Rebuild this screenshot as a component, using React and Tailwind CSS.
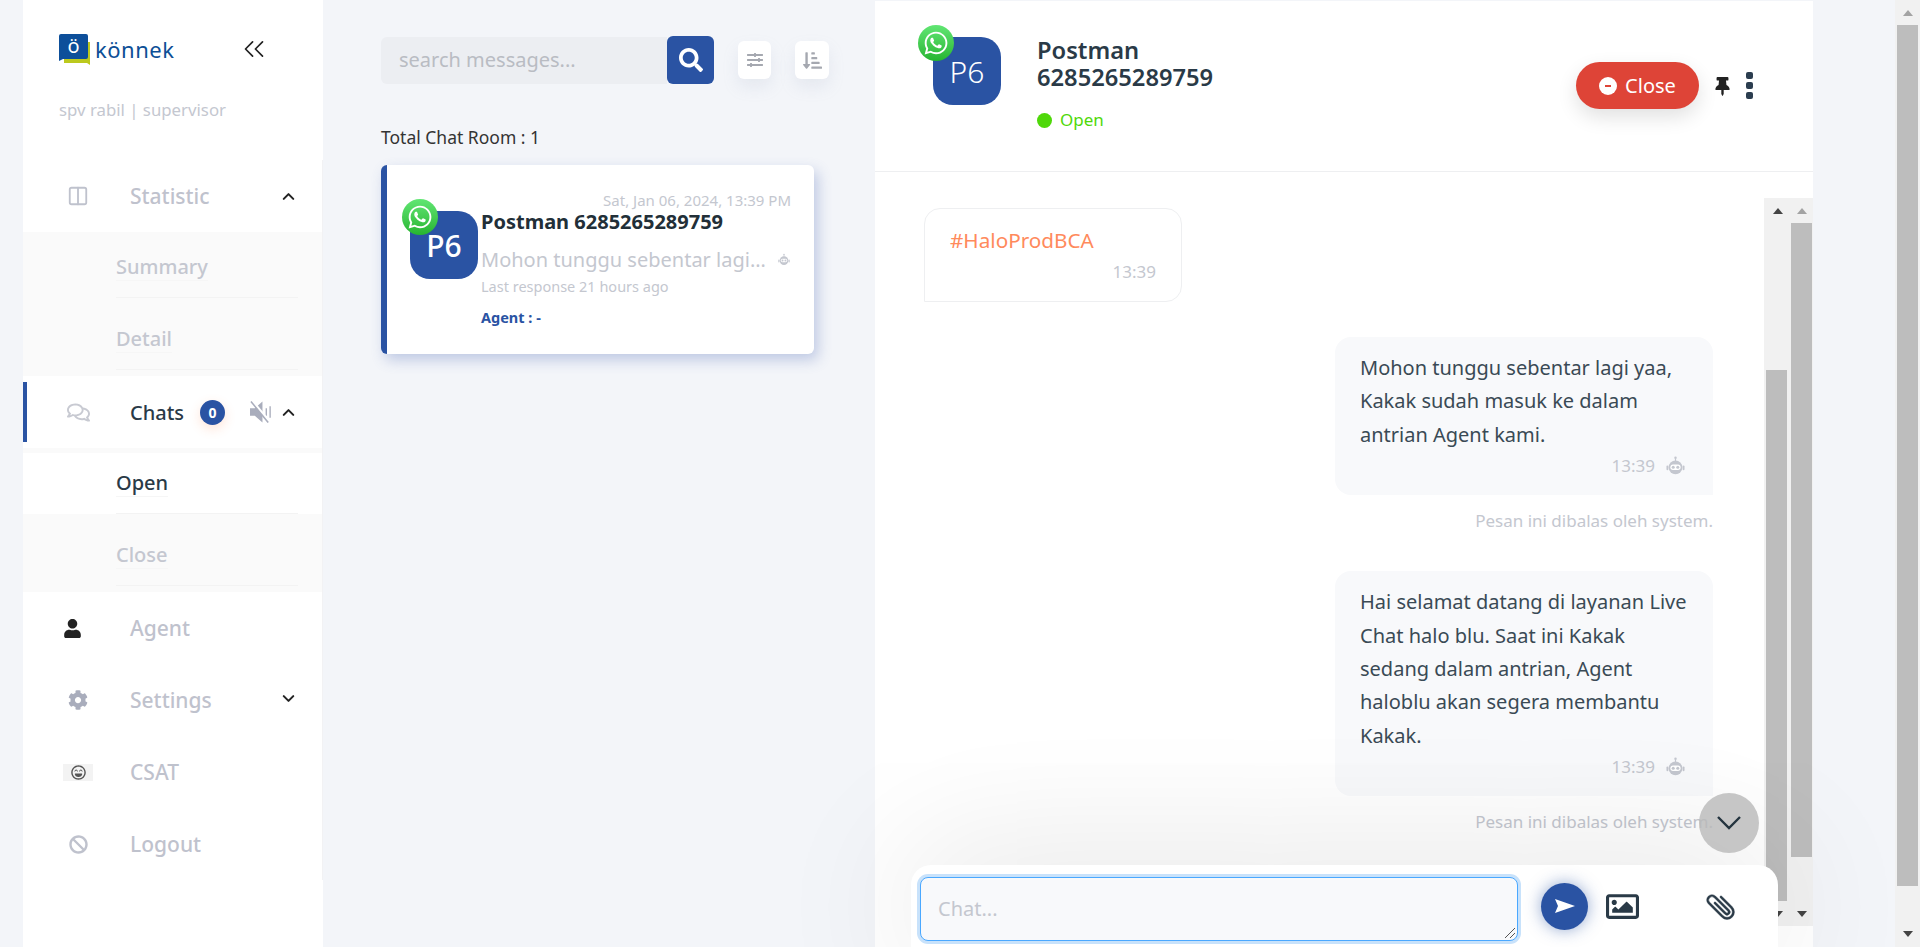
import {
  FaWhatsapp, FaSearch, FaSlidersH, FaSortAmountDownAlt, FaUser, FaCog, FaRegLaughBeam, FaBan,
  FaRegComments, FaThumbtack, FaRegImage,
} from "react-icons/fa";
import { BsPaperclip } from "react-icons/bs";
import { LuChevronUp, LuChevronDown, LuChevronsLeft, LuColumns2 } from "react-icons/lu";

function Robot({ className }) {
  return (
    <svg viewBox="0 0 20 22" className={className} fill="currentColor">
      <circle cx="10" cy="1.8" r="1.3" />
      <rect x="9.4" y="2.5" width="1.2" height="3" />
      <circle cx="10" cy="12" r="7.2" />
      <rect x="0.5" y="10" width="2" height="5" rx="1" />
      <rect x="17.5" y="10" width="2" height="5" rx="1" />
      <rect x="4.6" y="9" width="10.8" height="5.6" rx="2.8" fill="#fff" />
      <circle cx="7.6" cy="11.8" r="1.6" />
      <circle cx="12.4" cy="11.8" r="1.6" />
    </svg>
  );
}

function Wa({ className }) {
  return (
    <div className={`flex h-9 w-9 items-center justify-center rounded-full bg-gradient-to-b from-[#61e673] to-[#25b52f] text-white ${className}`}>
      <FaWhatsapp size={26} />
    </div>
  );
}

function Avatar({ className, textClass }) {
  return (
    <div className={`flex h-[68px] w-[68px] items-center justify-center rounded-[20px] bg-[#2a53a3] text-white ${textClass} ${className}`}>
      P6
    </div>
  );
}

function MenuRow({ icon, label, active, right }) {
  return (
    <div className="flex h-[72px] items-center bg-white">
      <span className={active ? "h-[60px] w-1 bg-[#2a53a3]" : "h-[60px] w-1"} />
      <span className="ml-9 flex w-[30px] items-center justify-center">{icon}</span>
      <span className={`ml-[37px] pt-[2px] font-medium ${active ? "text-[20px] text-[#2a3a47]" : "text-[21px] text-[#bfc2cd]"}`}>{label}</span>
      {right}
    </div>
  );
}

function SubItem({ label, active }) {
  return (
    <div className="h-[72px] pt-[5px]">
      <div className={`flex h-[61px] flex-col pl-[93px] pr-6 ${active ? "bg-white" : ""}`}>
        <div className={`flex flex-1 items-center border-b border-[#f3f3f3] text-[20px] font-medium ${active ? "text-[#2a3a47]" : "text-[#c4c7d0]"}`}>
          <span className="border-b border-[#f6f6f6] leading-[27px]">{label}</span>
        </div>
      </div>
    </div>
  );
}

function Sidebar() {
  return (
    <aside className="ml-[23px] h-full w-[300px] shrink-0 bg-white">
      <div className="h-[160px] pl-9">
        <div className="flex h-[66px] items-center pt-8">
          <div className="relative h-[31px] w-[31px]">
            <svg viewBox="0 0 31 31" className="h-[31px] w-[31px]">
              <path d="M5 8h26v23l-3-2H5z" fill="#bcc91e" />
              <path d="M2 0h25a2 2 0 0 1 2 2v21a2 2 0 0 1-2 2H4l-4 2V2a2 2 0 0 1 2-2z" fill="#0d4f9a" />
            </svg>
            <span className="absolute left-0 top-0 flex h-[25px] w-[29px] items-center justify-center text-[20px] leading-none text-white">ö</span>
          </div>
          <span className="ml-[5px] text-[22px] leading-[30px] tracking-[0.5px] text-[#0d4f96]">könnek</span>
          <LuChevronsLeft className="ml-[63px] text-[#222]" size={34} strokeWidth={1.2} />
        </div>
        <div className="mt-[32px] text-[16.8px] leading-6 text-[#c4c7d0]">spv rabil | supervisor</div>
      </div>

      <div className="border-r border-[#f2f2f4]">
        <MenuRow
          icon={<LuColumns2 size={22} className="text-[#bfc2cd]" />}
          label="Statistic"
          right={<LuChevronUp className="ml-auto mr-6 text-[#222]" size={19} strokeWidth={2.6} />}
        />
        <div className="bg-[#fafafa]">
          <SubItem label="Summary" />
          <SubItem label="Detail" />
        </div>
        <MenuRow
          icon={<FaRegComments size={23} className="text-[#c8cad2]" />}
          label="Chats"
          active
          right={
            <>
              <span className="ml-4 flex h-[25px] w-[25px] items-center justify-center rounded-full bg-[#2a53a3] text-[14px] font-bold text-white shadow-[0_4px_12px_rgba(255,120,60,0.2)]">0</span>
              <svg viewBox="0 0 24 22" className="ml-[25px] h-[22px] w-[23px]">
                <path d="M0 7h5l8-7v22l-8-7H0z" fill="#a9adbc" />
                <path d="M17 7v8M21 5v12" stroke="#a9adbc" strokeWidth="1.4" />
                <path d="M3 0l18 22" stroke="#fff" strokeWidth="2.6" />
                <path d="M1 0l18 22" stroke="#a9adbc" strokeWidth="1.6" />
              </svg>
              <LuChevronUp className="ml-auto mr-6 text-[#222]" size={19} strokeWidth={2.6} />
            </>
          }
        />
        <div className="bg-[#fafafa]">
          <SubItem label="Open" active />
          <SubItem label="Close" />
        </div>
        <MenuRow icon={<FaUser size={19} className="-ml-[12px] text-[#222]" />} label="Agent" />
        <MenuRow
          icon={<FaCog size={20} className="text-[#a9adbc]" />}
          label="Settings"
          right={<LuChevronDown className="ml-auto mr-6 -mt-1 text-[#222]" size={19} strokeWidth={2.6} />}
        />
        <MenuRow
          icon={<span className="flex h-[17px] w-[30px] items-center justify-center bg-[#f3f3f3]"><FaRegLaughBeam size={15} className="text-[#555]" /></span>}
          label="CSAT"
        />
        <MenuRow icon={<FaBan size={19} className="text-[#bfc2cd]" />} label="Logout" />
      </div>
    </aside>
  );
}

function ChatList() {
  return (
    <main className="h-full w-[552px] shrink-0 pl-[58px] pt-9">
      <div className="flex items-center">
        <div className="flex h-[47px] w-[286px] items-center rounded-l-md bg-[#eceef2] pl-[18px] text-[20px] text-[#b9bcc3]">search messages...</div>
        <div className="flex h-12 w-[47px] items-center justify-center rounded-md bg-[#2a53a3] text-white"><FaSearch size={24} /></div>
        <div className="ml-6 flex h-[38px] w-[33px] items-center justify-center rounded-md bg-white text-[#a5a8b0] shadow-[0_8px_16px_rgba(150,160,190,0.15)]"><FaSlidersH size={16} /></div>
        <div className="ml-6 flex h-[38px] w-[34px] items-center justify-center rounded-md bg-white text-[#a5a8b0] shadow-[0_8px_16px_rgba(150,160,190,0.15)]"><FaSortAmountDownAlt size={19} /></div>
      </div>
      <div className="mt-[41px] text-[17.5px] leading-6 text-[#333]">Total Chat Room : 1</div>
      <div className="relative mt-4 h-[189px] w-[433px] rounded-md border-l-[6px] border-[#2a53a3] bg-white shadow-[4px_6px_14px_rgba(70,100,180,0.3)]">
        <div className="pr-[23px] pt-[25px] text-right text-[15px] leading-5 text-[#c4c7cf]">Sat, Jan 06, 2024, 13:39 PM</div>
        <div className="flex pl-[23px]">
          <Avatar className="mt-[1px] shrink-0" textClass="text-[30px] font-medium" />
          <div className="ml-[3px] min-w-0">
            <div className="text-[20px] font-bold leading-6 text-[#222f38]">Postman 6285265289759</div>
            <div className="mt-[11px] flex items-center">
              <span className="w-[289px] truncate text-[20px] leading-[30px] text-[#c4c7cf]">Mohon tunggu sebentar lagi yaa, Kakak</span>
              <Robot className="ml-2 h-[14px] w-[12px] text-[#c4c7cf]" />
            </div>
            <div className="mt-[1px] text-[14.5px] leading-5 text-[#c4c7cf]">Last response 21 hours ago</div>
            <div className="mt-[11px] text-[14.5px] font-bold leading-5 text-[#2a53a3]">Agent : -</div>
          </div>
        </div>
        <Wa className="absolute left-[15px] top-[34px]" />
      </div>
    </main>
  );
}

function Meta({ robot }) {
  return (
    <div className="flex items-center justify-end text-[17px] leading-6 text-[#c4c7cf]">
      13:39
      {robot && <Robot className="ml-[11px] h-[21px] w-[19px] text-[#c4c7cf]" />}
    </div>
  );
}

function BotBubble({ lines, className }) {
  return (
    <div className={className}>
      <div className="ml-auto w-[378px] rounded-[16px] rounded-br-none bg-[#f8f9fb] px-[25px] pt-[14px] pb-[17px]">
        <div className="text-[20px] leading-[33.4px] text-[#3a4a55]">
          {lines.map((l) => <div key={l}>{l}</div>)}
        </div>
        <div className="mt-[3px] pr-[3px]"><Meta robot /></div>
      </div>
      <div className="mt-[14px] text-right text-[17px] leading-6 text-[#c4c7cf]">Pesan ini dibalas oleh system.</div>
    </div>
  );
}

function Arrow({ up, dark }) {
  return (
    <div className="flex h-[25px] items-center justify-center">
      <span className={`h-0 w-0 border-x-[5.5px] border-x-transparent ${up ? "border-b-[6px]" : "border-t-[6px]"} ${dark ? "border-[#444] border-x-transparent" : "border-[#a3a3a3] border-x-transparent"}`} />
    </div>
  );
}

function ChatPanel() {
  return (
    <section className="relative mt-px h-[946px] w-[938px] shrink-0 bg-white">
      <header className="flex h-[171px] border-b border-[#eeeff1] pl-[58px]">
        <div className="relative pt-9">
          <Avatar textClass="text-[30px] font-light" />
          <Wa className="absolute -left-[15px] top-6" />
        </div>
        <div className="ml-9 pt-[36px]">
          <div className="w-[200px] text-[23.7px] font-semibold leading-[27px] text-[#2a3a47]">Postman 6285265289759</div>
          <div className="mt-[17px] flex items-center text-[17px] leading-6 text-[#4fd80a]">
            <span className="mr-2 h-[15px] w-[15px] rounded-full bg-[#4fd80a]" />
            Open
          </div>
        </div>
        <div className="ml-auto flex items-start pt-[61px] pr-[60px]">
          <div className="flex h-[47px] w-[123px] items-center justify-center rounded-full bg-[#de4437] text-[20px] text-white shadow-[0_8px_20px_rgba(0,0,0,0.12)]">
            <span className="mr-2 flex h-[18px] w-[18px] items-center justify-center rounded-full bg-white">
              <span className="h-[2px] w-[6px] bg-[#de4437]" />
            </span>
            Close
          </div>
          <FaThumbtack size={19} className="ml-[14px] mt-[15px] text-[#222]" />
          <div className="ml-[14px] mt-[10px] flex w-[7px] flex-col gap-[3px]">
            <span className="h-[7px] rounded-[2px] bg-[#2b3d4f]" />
            <span className="h-[7px] rounded-[2px] bg-[#2b3d4f]" />
            <span className="h-[7px] rounded-[2px] bg-[#2b3d4f]" />
          </div>
        </div>
      </header>

      <div className="flex h-[775px]">
        <div className="w-[889px] pl-[49px] pr-[51px] pt-9">
          <div className="h-[94px] w-[258px] rounded-[16px] rounded-bl-none border border-[#eeeff1] px-[25px] pt-[16px]">
            <div className="text-[20.7px] leading-[30px] text-[#ff8a5c]">#HaloProdBCA</div>
            <div className="pt-[5px] pr-0"><Meta /></div>
          </div>
          <BotBubble
            className="mt-[35px]"
            lines={["Mohon tunggu sebentar lagi yaa,", "Kakak sudah masuk ke dalam", "antrian Agent kami."]}
          />
          <BotBubble
            className="mt-[38px]"
            lines={["Hai selamat datang di layanan Live", "Chat halo blu. Saat ini Kakak", "sedang dalam antrian, Agent", "haloblu akan segera membantu", "Kakak."]}
          />
        </div>
        <div className="mt-[26px] flex h-[728px] w-[49px] bg-[#f1f1f1]">
          <div className="flex w-[25px] flex-col pl-[2px]">
            <Arrow up dark />
            <div className="mt-[147px] h-[531px] w-[21px] bg-[#bdbdbd]" />
            <Arrow dark />
          </div>
          <div className="flex w-6 flex-col pl-[2px] pr-px">
            <Arrow up />
            <div className="h-[634px] w-[21px] bg-[#bdbdbd]" />
            <div className="mt-[44px]"><Arrow dark /></div>
          </div>
        </div>
      </div>

      <button className="absolute left-[824px] top-[792px] z-10 flex h-[60px] w-[60px] items-center justify-center rounded-full bg-[#b9b9b9]/80">
        <svg viewBox="0 0 24 14" className="h-[14px] w-6" fill="none" stroke="#24343f" strokeWidth="2.4"><path d="M1 1l11 11L23 1" /></svg>
      </button>

      <div className="absolute bottom-0 left-9 flex h-[82px] w-[867px] items-center rounded-t-[20px] bg-white pl-[9px] shadow-[0_0_150px_rgba(0,0,0,0.14)]">
        <div className="relative mt-[6px] flex h-16 w-[598px] items-center rounded-lg border border-[#4aa8ff] bg-[#f8f9fb] pl-[17px] text-[20px] text-[#c4c7cf] ring-[3px] ring-[#c8e2fb]">
          Chat...
          <svg viewBox="0 0 12 12" className="absolute bottom-[1px] right-[1px] h-3 w-3" stroke="#555" fill="none"><path d="M1 11L11 1M6 11l5-5" /></svg>
        </div>
        <div className="ml-[23px] flex h-[47px] w-[47px] items-center justify-center rounded-full bg-[#2a53a3] shadow-[0_0_16px_rgba(42,83,163,0.5)]">
          <svg viewBox="0 0 20 14" className="h-[14px] w-5" fill="#fff"><path d="M0 0l20 7L0 14l3-7z" /></svg>
        </div>
        <FaRegImage size={33} className="ml-[18px] text-[#2a3a47]" />
        <BsPaperclip size={34} strokeWidth={0.2} className="ml-[65px] -rotate-45 text-[#2a3a47]" />
      </div>
    </section>
  );
}

export default function App() {
  return (
    <div className="flex h-[947px] w-full overflow-hidden bg-[#f3f5f9] font-['Noto_Sans',sans-serif]">
      <Sidebar />
      <ChatList />
      <ChatPanel />
      <div className="flex-1" />
      <div className="flex h-full w-[25px] shrink-0 flex-col bg-[#f1f1f1] pl-[2px] pr-[2px]">
        <Arrow up />
        <div className="h-[861px] w-[21px] bg-[#bdbdbd]" />
        <div className="mt-[35px]"><Arrow dark /></div>
      </div>
    </div>
  );
}
